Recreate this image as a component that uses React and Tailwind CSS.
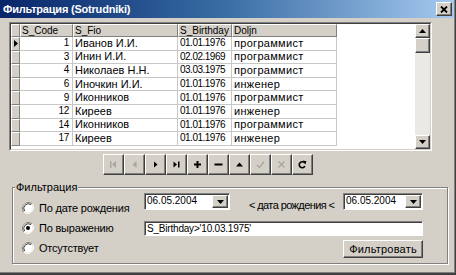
import React from 'react';

const rows = [
  { code: 1, fio: 'Иванов И.И.', bd: '01.01.1976', dol: 'программист' },
  { code: 3, fio: 'Инин И.И.', bd: '02.02.1969', dol: 'программист' },
  { code: 4, fio: 'Николаев Н.Н.', bd: '03.03.1975', dol: 'программист' },
  { code: 6, fio: 'Иночкин И.И.', bd: '01.01.1976', dol: 'инженер' },
  { code: 9, fio: 'Иконников', bd: '01.01.1976', dol: 'программист' },
  { code: 12, fio: 'Киреев', bd: '01.01.1976', dol: 'инженер' },
  { code: 14, fio: 'Иконников', bd: '01.01.1976', dol: 'программист' },
  { code: 17, fio: 'Киреев', bd: '01.01.1976', dol: 'инженер' },
];

// classic 3D edges
const raised =
  'bg-[#d4d0c8] border border-t-white border-l-white border-r-[#404040] border-b-[#404040] shadow-[inset_-1px_-1px_0_#808080]';
const sunken =
  'bg-white border border-t-[#808080] border-l-[#808080] border-r-white border-b-white shadow-[inset_1px_1px_0_#404040]';
const headCell =
  'h-full flex items-center border border-t-white border-l-white border-r-[#808080] border-b-[#808080] pl-[1px]';
const cell = 'h-full flex items-center border-r border-b border-[#c8c8c8] whitespace-nowrap overflow-hidden';

const Tri = ({ dir = 'down', color = '#000' }) => {
  const pts = {
    down: '0,0 7,0 3.5,4',
    up: '0,4 7,4 3.5,0',
  }[dir];
  return (
    <svg width="7" height="4" viewBox="0 0 7 4">
      <polygon points={pts} fill={color} />
    </svg>
  );
};

const NavIcon = ({ kind }) => {
  const off = '#a8a6a0';
  switch (kind) {
    case 'first':
      return (
        <svg width="9" height="9" viewBox="0 0 9 9">
          <rect x="1" y="1" width="1.5" height="7" fill={off} />
          <polygon points="7,1 3,4.5 7,8" fill={off} />
        </svg>
      );
    case 'prior':
      return (
        <svg width="9" height="9" viewBox="0 0 9 9">
          <polygon points="6.5,1 2.5,4.5 6.5,8" fill={off} />
        </svg>
      );
    case 'next':
      return (
        <svg width="9" height="9" viewBox="0 0 9 9">
          <polygon points="3,1.5 6.5,4.5 3,7.5" fill="#000" />
        </svg>
      );
    case 'last':
      return (
        <svg width="9" height="9" viewBox="0 0 9 9">
          <polygon points="1.5,1.5 5,4.5 1.5,7.5" fill="#000" />
          <rect x="6" y="1.5" width="1.5" height="6" fill="#000" />
        </svg>
      );
    case 'insert':
      return (
        <svg width="9" height="9" viewBox="0 0 9 9">
          <rect x="3.5" y="1" width="2" height="7" fill="#000" />
          <rect x="1" y="3.5" width="7" height="2" fill="#000" />
        </svg>
      );
    case 'delete':
      return (
        <svg width="9" height="9" viewBox="0 0 9 9">
          <rect x="0.5" y="3.5" width="8" height="2" fill="#000" />
        </svg>
      );
    case 'edit':
      return (
        <svg width="9" height="9" viewBox="0 0 9 9">
          <polygon points="1,6.5 8,6.5 4.5,2.5" fill="#000" />
        </svg>
      );
    case 'post':
      return (
        <svg width="9" height="9" viewBox="0 0 9 9">
          <polyline points="1,5 3.5,7.5 8,1.5" fill="none" stroke={off} strokeWidth="1.3" />
        </svg>
      );
    case 'cancel':
      return (
        <svg width="9" height="9" viewBox="0 0 9 9">
          <path d="M1.5 1.5 L7.5 7.5 M7.5 1.5 L1.5 7.5" stroke={off} strokeWidth="1.3" />
        </svg>
      );
    default:
      return (
        <svg width="9" height="9" viewBox="0 0 9 9">
          <path d="M6.8 3.2 A3 3 0 1 0 6.9 6.2" fill="none" stroke="#000" strokeWidth="1.6" />
          <polygon points="4.8,0.6 8.4,1.2 7.4,4.6" fill="#000" />
        </svg>
      );
  }
};

const Radio = ({ checked }) => (
  <svg width="12" height="12" viewBox="0 0 12 12">
    <path d="M10.2 1.8 A6 6 0 0 0 1.8 10.2" fill="none" stroke="#808080" strokeWidth="1" />
    <path d="M1.8 10.2 A6 6 0 0 0 10.2 1.8" fill="none" stroke="#ffffff" strokeWidth="1" />
    <circle cx="6" cy="6" r="4.8" fill="#fff" />
    <path d="M9 2.6 A4.6 4.6 0 0 0 2.6 9" fill="none" stroke="#404040" strokeWidth="1" />
    {checked && <circle cx="6" cy="6" r="2" fill="#000" />}
  </svg>
);

const Combo = ({ value, w }) => (
  <div className={`${sunken} ${w} h-[17px] flex items-stretch`}>
    <div className="flex-1 pl-[2px] text-[10px] leading-[12px] pt-[1px]">{value}</div>
    <div className={`${raised} w-[16px] flex items-center justify-center my-[1px] mr-[1px]`}>
      <Tri />
    </div>
  </div>
);

export default function App() {
  return (
    <div className="w-[456px] h-[275px] bg-[#d4d0c8] text-black font-['Liberation_Sans',Arial,sans-serif] border-r border-b-2 border-r-[#404040] border-b-[#404040] shadow-[inset_-1px_-1px_0_#808080] overflow-hidden">
      {/* title bar */}
      <div className="h-[18px] mr-[1px] bg-gradient-to-r from-[#0a246a] via-[#3a6ea5] to-[#a6caf0] flex items-center justify-between">
        <span className="pl-[3px] text-white font-bold text-[11px] leading-none tracking-[-0.2px]">Фильтрация (Sotrudniki)</span>
        <div className={`${raised} w-[16px] h-[14px] mr-[2px] flex items-center justify-center`}>
          <svg width="8" height="7" viewBox="0 0 8 7">
            <path d="M1 0.5 L7 6.5 M7 0.5 L1 6.5" stroke="#000" strokeWidth="1.8" />
          </svg>
        </div>
      </div>

      {/* data grid */}
      <div className="ml-[9px] mt-[4px] w-[423px] h-[129px] border border-t-[#808080] border-l-[#808080] border-r-white border-b-white">
        <div className="w-full h-full border border-t-[#404040] border-l-[#404040] border-r-[#d4d0c8] border-b-[#d4d0c8] bg-white flex text-[11px] leading-none">
          <div className="w-[326px] flex flex-col">
            <div className="h-[13px] flex bg-[#d4d0c8] text-[10px]">
              <div className={`${headCell} w-[9px]`} />
              <div className={`${headCell} w-[53px]`}>S_Code</div>
              <div className={`${headCell} w-[105px]`}>S_Fio</div>
              <div className={`${headCell} w-[54px]`}>S_Birthday</div>
              <div className={`${headCell} w-[105px]`}>Doljn</div>
            </div>
            {rows.map((r, i) => (
              <div key={r.code} className="h-[13.6px] flex">
                <div className={`${headCell} w-[9px] bg-[#d4d0c8] justify-center pl-0`}>
                  {i === 0 && (
                    <svg width="4" height="7" viewBox="0 0 4 7">
                      <polygon points="0,0 4,3.5 0,7" fill="#000" />
                    </svg>
                  )}
                </div>
                <div className={`${cell} w-[53px] justify-end pr-[3px] text-[10px] tracking-[-0.3px]`}>{r.code}</div>
                <div className={`${cell} w-[105px] pl-[2px]`}>{r.fio}</div>
                <div className={`${cell} w-[54px] pl-[2px] text-[10px] tracking-[-0.5px]`}>{r.bd}</div>
                <div className={`${cell} w-[105px] pl-[2px] tracking-[0.3px]`}>{r.dol}</div>
              </div>
            ))}
          </div>
          <div className="flex-1" />
          <div className="w-[15px] flex flex-col bg-[#ebe9e4]">
            <div className={`${raised} h-[14px] flex items-center justify-center`}>
              <Tri dir="up" />
            </div>
            <div className={`${raised} h-[15px]`} />
            <div className="flex-1" />
            <div className={`${raised} h-[14px] flex items-center justify-center`}>
              <Tri />
            </div>
          </div>
        </div>
      </div>

      {/* navigator */}
      <div className="ml-[103px] mt-[3px] flex">
        {['first', 'prior', 'next', 'last', 'insert', 'delete', 'edit', 'post', 'cancel', 'refresh'].map((k) => (
          <div key={k} className={`${raised} w-[21px] h-[21px] flex items-center justify-center`}>
            <NavIcon kind={k} />
          </div>
        ))}
      </div>

      {/* filter group */}
      <div className="relative ml-[12px] mt-[12px] w-[436px] h-[77px] border border-[#808080] shadow-[inset_1px_1px_0_#fff,1px_1px_0_#fff] flex text-[11px] leading-[13px]">
        <span className="absolute -top-[7px] left-[2px] px-[1px] bg-[#d4d0c8]">Фильтрация</span>
        <div className="w-[131px] pt-[10px] pl-[9px] flex flex-col">
          {[
            ['По дате рождения', false],
            ['По выражению', true],
            ['Отсутствует', false],
          ].map(([label, on]) => (
            <div key={label} className="h-[20px] flex items-center whitespace-nowrap">
              <Radio checked={on} />
              <span className="ml-[5px] tracking-[-0.2px]">{label}</span>
            </div>
          ))}
        </div>
        <div className="w-[279px] pt-[5px] flex flex-col">
          <div className="h-[17px] flex items-start">
            <Combo value="06.05.2004" w="w-[86px]" />
            <span className="ml-[19px] mt-[6px] whitespace-nowrap tracking-[-0.6px]">&lt; дата рождения &lt;</span>
            <div className="ml-auto">
              <Combo value="06.05.2004" w="w-[80px]" />
            </div>
          </div>
          <div className={`${sunken} mt-[11px] h-[15px] pl-[2px] flex items-center text-[10px] tracking-[-0.2px]`}>S_Birthday&gt;'10.03.1975'</div>
          <div className={`${raised} ml-auto mt-[4px] w-[80px] h-[18px] flex items-center justify-center tracking-[0.2px]`}>
            Фильтровать
          </div>
        </div>
      </div>
    </div>
  );
}
